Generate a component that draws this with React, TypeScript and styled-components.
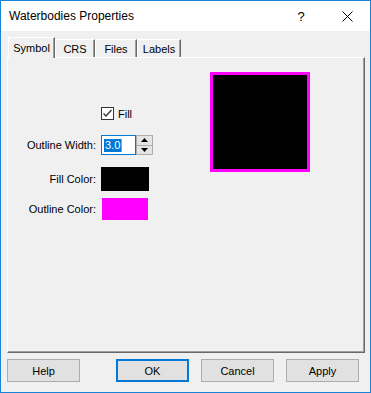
import React from "react";
import styled, { createGlobalStyle } from "styled-components";

const GlobalStyle = createGlobalStyle`
  html, body {
    margin: 0;
    padding: 0;
    background: #ffffff;
  }
  body {
    font-family: "Liberation Sans", Arial, sans-serif;
    font-size: 11px;
    color: #000;
  }
`;

const Window = styled.div`
  width: 371px;
  height: 393px;
  box-sizing: border-box;
  border: 1px solid #1883d7;
  display: flex;
  flex-direction: column;
  background: #f0f0f0;
`;

const TitleBar = styled.div`
  height: 30px;
  background: #ffffff;
  display: flex;
  align-items: center;
  padding-left: 8px;
`;

const Title = styled.span`
  flex: 1;
  font-size: 12px;
  color: #000;
`;

const CaptionButton = styled.div`
  width: 46px;
  height: 30px;
  display: flex;
  align-items: center;
  justify-content: center;
  font-size: 13px;
`;

const Body = styled.div`
  flex: 1;
  display: flex;
  flex-direction: column;
  padding: 5px 5px 0 6px;
`;

const TabStrip = styled.div`
  display: flex;
  align-items: flex-end;
  height: 21px;
  padding-left: 1px;
  position: relative;
  z-index: 1;
`;

const Tab = styled.div<{ $w: number; $active?: boolean }>`
  width: ${(p) => p.$w}px;
  height: ${(p) => (p.$active ? 21 : 18)}px;
  box-sizing: border-box;
  display: flex;
  align-items: ${(p) => (p.$active ? "flex-start" : "center")};
  padding-top: ${(p) => (p.$active ? 4 : 0)}px;
  justify-content: center;
  background: #f0f0f0;
  border-top: 1px solid #ffffff;
  border-left: 1px solid #ffffff;
  border-right: 1px solid #696969;
  box-shadow: inset -1px 0 0 #a0a0a0;
  margin-bottom: ${(p) => (p.$active ? -1 : 0)}px;
`;

const Panel = styled.div`
  height: 296px;
  box-sizing: border-box;
  border-top: 1px solid #ffffff;
  border-left: 1px solid #ffffff;
  border-right: 1px solid #696969;
  border-bottom: 1px solid #696969;
  box-shadow: inset -1px -1px 0 #a0a0a0;
  display: flex;
  align-items: flex-start;
`;

const Form = styled.div`
  margin-top: 49px;
  display: grid;
  grid-template-columns: 88px 52px;
  grid-template-rows: 28px 32px 30px 24px;
  column-gap: 5px;
  align-items: start;
`;

const Label = styled.div<{ $h: number }>`
  height: ${(p) => p.$h}px;
  display: flex;
  align-items: center;
  justify-content: flex-end;
  white-space: nowrap;
`;

const CheckRow = styled.label`
  grid-column: 2;
  display: flex;
  align-items: center;
  gap: 4px;
  height: 13px;
  white-space: nowrap;
`;

const CheckBox = styled.span`
  width: 13px;
  height: 13px;
  box-sizing: border-box;
  border: 1px solid #333333;
  background: #ffffff;
  display: flex;
  align-items: center;
  justify-content: center;
`;

const Spinner = styled.div`
  display: flex;
  height: 20px;
`;

const SpinInput = styled.div`
  width: 35px;
  height: 20px;
  box-sizing: border-box;
  border: 1px solid #0078d7;
  background: #ffffff;
  display: flex;
  align-items: center;
  padding-left: 2px;
`;

const Selected = styled.span`
  background: #0078d7;
  color: #ffffff;
  height: 13px;
  line-height: 13px;
  padding: 0 1px;
  border-right: 1px solid #ff8c00;
`;

const SpinButtons = styled.div`
  width: 17px;
  height: 20px;
  box-sizing: border-box;
  border: 1px solid #adadad;
  display: flex;
  flex-direction: column;
`;

const SpinButton = styled.div`
  flex: 1;
  background: #e5e5e5;
  display: flex;
  align-items: center;
  justify-content: center;
  & + & {
    border-top: 1px solid #adadad;
  }
`;

const Swatch = styled.div<{ $color: string; $inset?: boolean }>`
  width: 48px;
  height: 24px;
  box-sizing: border-box;
  background: ${(p) => p.$color};
  border: ${(p) => (p.$inset ? "1px solid #f0f0f0" : "none")};
`;

const Preview = styled.div`
  margin-top: 14px;
  margin-left: 57px;
  width: 100px;
  height: 100px;
  box-sizing: border-box;
  border: 3px solid #ff00ff;
  background: #000000;
`;

const ButtonRow = styled.div`
  display: flex;
  align-items: center;
  justify-content: space-between;
  margin-top: 6px;
  padding-right: 6px;
`;

const ButtonGroup = styled.div`
  display: flex;
  gap: 12px;
`;

const Button = styled.button<{ $default?: boolean }>`
  width: 73px;
  height: 23px;
  box-sizing: border-box;
  margin: 0;
  padding: 0;
  font-family: "Liberation Sans", Arial, sans-serif;
  font-size: 11px;
  color: #000;
  background: #e1e1e1;
  border: ${(p) => (p.$default ? "2px solid #0078d7" : "1px solid #adadad")};
`;

const Check = () => (
  <svg width="11" height="11" viewBox="0 0 11 11">
    <polyline points="1.5,5.5 4,8 9.5,2" fill="none" stroke="#333" strokeWidth="1.3" />
  </svg>
);

const Arrow = ({ up }: { up?: boolean }) => (
  <svg width="7" height="4" viewBox="0 0 7 4">
    <polygon points={up ? "0,4 7,4 3.5,0" : "0,0 7,0 3.5,4"} fill="#000" />
  </svg>
);

const CloseIcon = () => (
  <svg width="11" height="11" viewBox="0 0 11 11">
    <path d="M0.5 0.5 L10.5 10.5 M10.5 0.5 L0.5 10.5" stroke="#000" strokeWidth="1" />
  </svg>
);

export default function App() {
  return (
    <>
      <GlobalStyle />
      <Window>
        <TitleBar>
          <Title>Waterbodies Properties</Title>
          <CaptionButton>?</CaptionButton>
          <CaptionButton>
            <CloseIcon />
          </CaptionButton>
        </TitleBar>
        <Body>
          <TabStrip>
            <Tab $w={47} $active>
              Symbol
            </Tab>
            <Tab $w={40}>CRS</Tab>
            <Tab $w={42}>Files</Tab>
            <Tab $w={44}>Labels</Tab>
          </TabStrip>
          <Panel>
            <Form>
              <CheckRow>
                <CheckBox>
                  <Check />
                </CheckBox>
                Fill
              </CheckRow>
              <Label $h={20}>Outline Width:</Label>
              <Spinner>
                <SpinInput>
                  <Selected>3.0</Selected>
                </SpinInput>
                <SpinButtons>
                  <SpinButton>
                    <Arrow up />
                  </SpinButton>
                  <SpinButton>
                    <Arrow />
                  </SpinButton>
                </SpinButtons>
              </Spinner>
              <Label $h={24}>Fill Color:</Label>
              <Swatch $color="#000000" />
              <Label $h={24}>Outline Color:</Label>
              <Swatch $color="#ff00ff" $inset />
            </Form>
            <Preview />
          </Panel>
          <ButtonRow>
            <Button>Help</Button>
            <ButtonGroup>
              <Button $default>OK</Button>
              <Button>Cancel</Button>
              <Button>Apply</Button>
            </ButtonGroup>
          </ButtonRow>
        </Body>
      </Window>
    </>
  );
}
